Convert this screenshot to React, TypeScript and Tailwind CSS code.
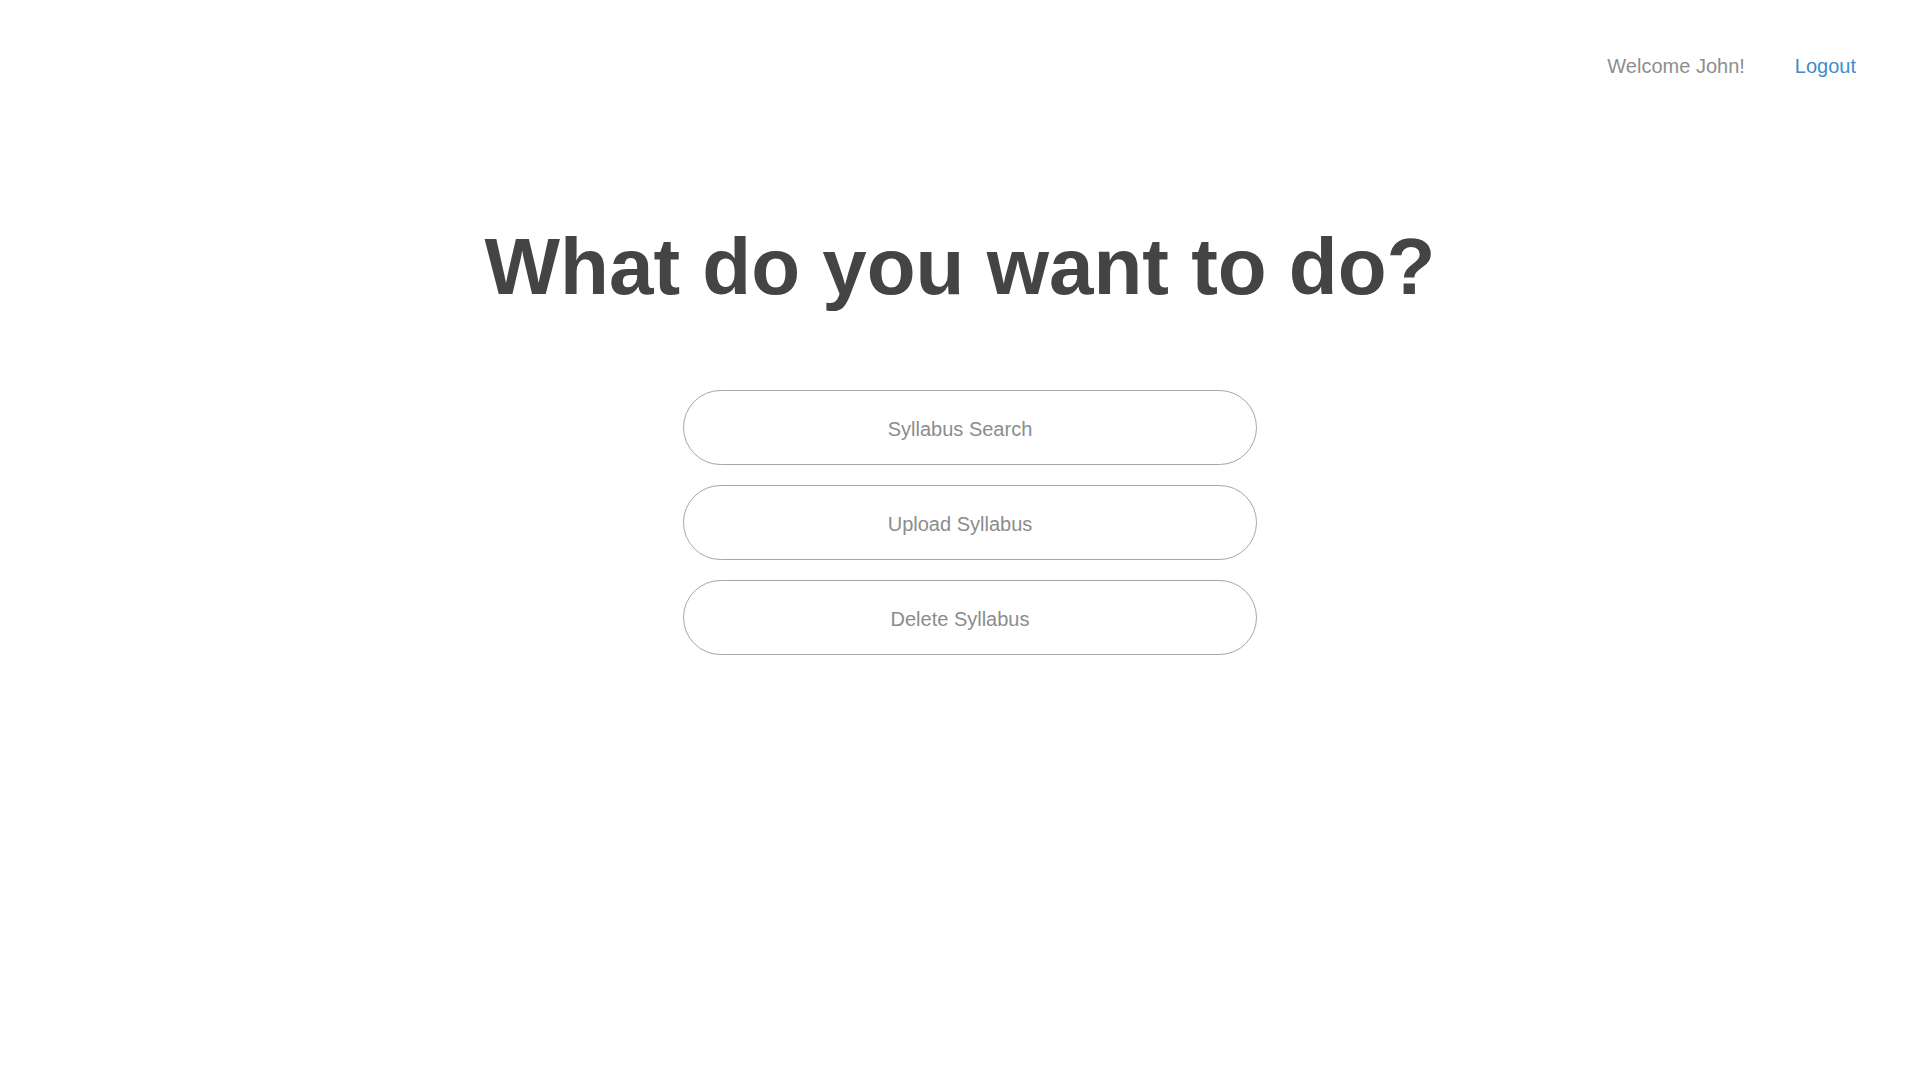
const actions = ["Syllabus Search", "Upload Syllabus", "Delete Syllabus"];

const App = () => {
  return (
    <div className="min-h-screen bg-white font-['Liberation_Sans',Arial,sans-serif]">
      <header className="flex justify-end items-center gap-[50px] pt-[52px] pr-[64px] text-[20px] leading-7">
        <span className="text-[#8e8e8e]">Welcome John!</span>
        <a href="#" className="text-[#428bca]">
          Logout
        </a>
      </header>

      <main className="flex flex-col items-center">
        <h1 className="mt-[147px] text-[80px] leading-none font-bold text-[#444444]">
          What do you want to do?
        </h1>

        <div className="mt-[83px] flex flex-col gap-[20px] pl-[20px]">
          {actions.map((label) => (
            <button
              key={label}
              className="w-[574px] h-[75px] rounded-full border border-[#a6a6a6] bg-white pr-5 pt-[2px] text-[20px] leading-7 text-[#8c8c8c]"
            >
              {label}
            </button>
          ))}
        </div>
      </main>
    </div>
  );
};

export default App;
